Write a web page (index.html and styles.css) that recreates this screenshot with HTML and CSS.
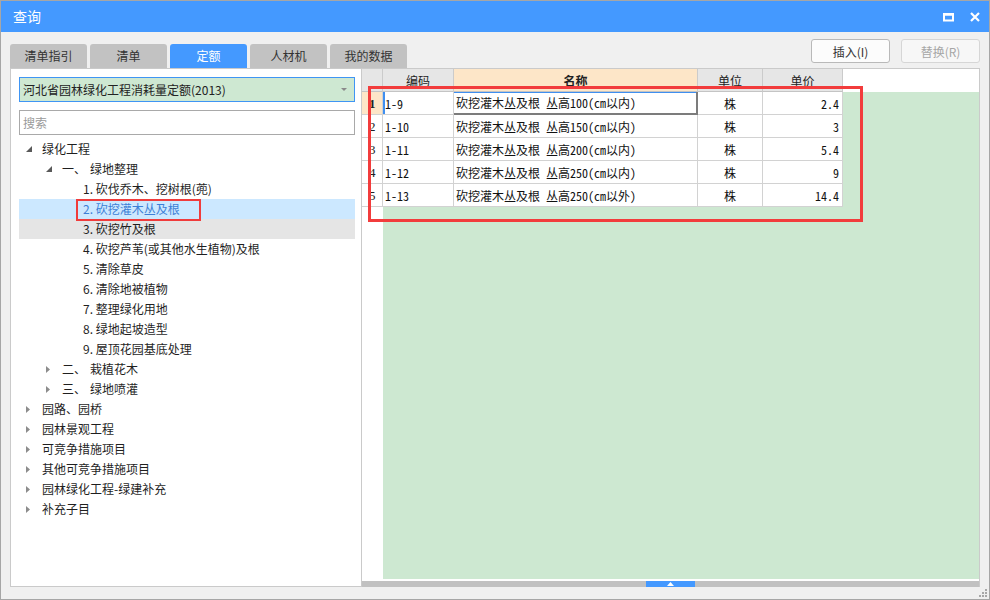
FILE: index.html
```html
<!DOCTYPE html>
<html lang="zh-CN">
<head>
<meta charset="utf-8">
<title>查询</title>
<link rel="stylesheet" href="styles.css">
</head>
<body>
<div class="window">
  <div class="titlebar">
    <span class="title">查询</span>
    <div class="win-btns">
      <svg class="ico-max" width="11" height="9" viewBox="0 0 11 9"><rect x="1" y="1.5" width="9" height="6" fill="none" stroke="#fff" stroke-width="2"/><rect x="0" y="0" width="11" height="2.5" fill="#fff"/></svg>
      <svg class="ico-close" width="10" height="10" viewBox="0 0 10 10"><path d="M1 1L9 9M9 1L1 9" stroke="#fff" stroke-width="2.2" fill="none"/></svg>
    </div>
  </div>

  <div class="toolbar">
    <div class="tabs">
      <div class="tab">清单指引</div>
      <div class="tab">清单</div>
      <div class="tab active">定额</div>
      <div class="tab">人材机</div>
      <div class="tab">我的数据</div>
    </div>
    <div class="actions">
      <button class="btn">插入(I)</button>
      <button class="btn disabled">替换(R)</button>
    </div>
  </div>

  <div class="main">
    <div class="left">
      <div class="combo"><span>河北省园林绿化工程消耗量定额(2013)</span><span class="combo-arrow"></span></div>
      <div class="search">搜索</div>
      <div class="tree">
        <div class="node l0"><span class="arr"><svg width="6" height="6" viewBox="0 0 6 6"><polygon points="6,0 6,6 0,6" fill="#595959"/></svg></span><span>绿化工程</span></div>
        <div class="node l1"><span class="arr"><svg width="6" height="6" viewBox="0 0 6 6"><polygon points="6,0 6,6 0,6" fill="#595959"/></svg></span><span>一、</span><span class="sp">绿地整理</span></div>
        <div class="node l2"><span>1. 砍伐乔木、挖树根(蔸)</span></div>
        <div class="node l2 selected"><span>2. 砍挖灌木丛及根</span></div>
        <div class="node l2 hover"><span>3. 砍挖竹及根</span></div>
        <div class="node l2"><span>4. 砍挖芦苇(或其他水生植物)及根</span></div>
        <div class="node l2"><span>5. 清除草皮</span></div>
        <div class="node l2"><span>6. 清除地被植物</span></div>
        <div class="node l2"><span>7. 整理绿化用地</span></div>
        <div class="node l2"><span>8. 绿地起坡造型</span></div>
        <div class="node l2"><span>9. 屋顶花园基底处理</span></div>
        <div class="node l1"><span class="arr"><svg width="4" height="7" viewBox="0 0 4 7"><polygon points="0,0 4,3.5 0,7" fill="#8c8c8c"/></svg></span><span>二、</span><span class="sp">栽植花木</span></div>
        <div class="node l1"><span class="arr"><svg width="4" height="7" viewBox="0 0 4 7"><polygon points="0,0 4,3.5 0,7" fill="#8c8c8c"/></svg></span><span>三、</span><span class="sp">绿地喷灌</span></div>
        <div class="node l0"><span class="arr"><svg width="4" height="7" viewBox="0 0 4 7"><polygon points="0,0 4,3.5 0,7" fill="#8c8c8c"/></svg></span><span>园路、园桥</span></div>
        <div class="node l0"><span class="arr"><svg width="4" height="7" viewBox="0 0 4 7"><polygon points="0,0 4,3.5 0,7" fill="#8c8c8c"/></svg></span><span>园林景观工程</span></div>
        <div class="node l0"><span class="arr"><svg width="4" height="7" viewBox="0 0 4 7"><polygon points="0,0 4,3.5 0,7" fill="#8c8c8c"/></svg></span><span>可竞争措施项目</span></div>
        <div class="node l0"><span class="arr"><svg width="4" height="7" viewBox="0 0 4 7"><polygon points="0,0 4,3.5 0,7" fill="#8c8c8c"/></svg></span><span>其他可竞争措施项目</span></div>
        <div class="node l0"><span class="arr"><svg width="4" height="7" viewBox="0 0 4 7"><polygon points="0,0 4,3.5 0,7" fill="#8c8c8c"/></svg></span><span>园林绿化工程-绿建补充</span></div>
        <div class="node l0"><span class="arr"><svg width="4" height="7" viewBox="0 0 4 7"><polygon points="0,0 4,3.5 0,7" fill="#8c8c8c"/></svg></span><span>补充子目</span></div>
      </div>
    </div>

    <div class="grid">
      <div class="ghead">
        <div class="hc c-num"></div>
        <div class="hc c-code">编码</div>
        <div class="hc c-name active">名称</div>
        <div class="hc c-unit">单位</div>
        <div class="hc c-price">单价</div>
        <div class="hc-rest"></div>
      </div>
      <div class="gbody">
        <div class="rownums">
          <div class="rn current">1</div>
          <div class="rn">2</div>
          <div class="rn">3</div>
          <div class="rn">4</div>
          <div class="rn">5</div>
        </div>
        <div class="gdata">
          <div class="row">
            <div class="cell c-code focus-row">1-9</div>
            <div class="cell c-name focus">砍挖灌木丛及根 丛高100(cm以内)</div>
            <div class="cell c-unit">株</div>
            <div class="cell c-price">2.4</div>
          </div>
          <div class="row">
            <div class="cell c-code">1-10</div>
            <div class="cell c-name">砍挖灌木丛及根 丛高150(cm以内)</div>
            <div class="cell c-unit">株</div>
            <div class="cell c-price">3</div>
          </div>
          <div class="row">
            <div class="cell c-code">1-11</div>
            <div class="cell c-name">砍挖灌木丛及根 丛高200(cm以内)</div>
            <div class="cell c-unit">株</div>
            <div class="cell c-price">5.4</div>
          </div>
          <div class="row">
            <div class="cell c-code">1-12</div>
            <div class="cell c-name">砍挖灌木丛及根 丛高250(cm以内)</div>
            <div class="cell c-unit">株</div>
            <div class="cell c-price">9</div>
          </div>
          <div class="row">
            <div class="cell c-code">1-13</div>
            <div class="cell c-name">砍挖灌木丛及根 丛高250(cm以外)</div>
            <div class="cell c-unit">株</div>
            <div class="cell c-price">14.4</div>
          </div>
        </div>
      </div>
      <div class="hscroll"><div class="thumb"><svg width="7" height="4" viewBox="0 0 7 4"><polygon points="3.5,0 7,4 0,4" fill="#fff"/></svg></div></div>
      <div class="mark-grid"></div>
    </div>
  </div>

  <svg class="grip" width="8" height="8" viewBox="0 0 8 8">
    <rect x="6" y="0" width="2" height="2" fill="#a8a8a8"/>
    <rect x="3" y="3" width="2" height="2" fill="#a8a8a8"/>
    <rect x="6" y="3" width="2" height="2" fill="#a8a8a8"/>
    <rect x="0" y="6" width="2" height="2" fill="#a8a8a8"/>
    <rect x="3" y="6" width="2" height="2" fill="#a8a8a8"/>
    <rect x="6" y="6" width="2" height="2" fill="#a8a8a8"/>
  </svg>
</div>
</body>
</html>
```

FILE: styles.css
```css
html, body {
  margin: 0;
  padding: 0;
  background: #ffffff;
}

body {
  font-family: "Noto Sans CJK SC", "Noto Sans", sans-serif;
  font-size: 12px;
  color: #222;
}

.window {
  position: relative;
  width: 990px;
  height: 600px;
  box-sizing: border-box;
  border: 1px solid #a6a6a6;
  background: #f0f0f0;
  display: flex;
  flex-direction: column;
}

/* title bar */
.titlebar {
  flex: none;
  height: 31px;
  background: #4499ff;
  display: flex;
  align-items: center;
  justify-content: space-between;
  padding: 0 9px 0 12px;
  color: #fff;
}

.title {
  font-size: 14px;
  line-height: 31px;
}

.win-btns {
  display: flex;
  align-items: center;
  gap: 16px;
  padding-top: 1px;
}

.win-btns svg {
  display: block;
}

/* toolbar */
.toolbar {
  flex: none;
  height: 36px;
  display: flex;
  justify-content: space-between;
  padding: 0 9px;
}

.tabs {
  display: flex;
  gap: 3px;
  align-self: flex-end;
}

.tab {
  width: 77px;
  height: 24px;
  line-height: 24px;
  text-align: center;
  background: #c2c2c2;
  border-radius: 3px 3px 0 0;
  color: #333;
  font-size: 12px;
}

.tab.active {
  background: #4499ff;
  color: #fff;
}

.actions {
  display: flex;
  gap: 11px;
  margin-top: 7px;
}

.btn {
  width: 79px;
  height: 24px;
  box-sizing: border-box;
  border: 1px solid #b9b9b9;
  border-radius: 3px;
  background: #fcfcfc;
  font-family: "Noto Sans CJK SC", "Noto Sans", sans-serif;
  font-size: 12px;
  color: #333;
  padding: 0;
}

.btn.disabled {
  border-color: #d6d6d6;
  color: #a6a6a6;
  background: #f7f7f7;
}

/* main area */
.main {
  flex: 1;
  display: flex;
  margin: 0 9px 12px 9px;
  min-height: 0;
}

.left {
  flex: none;
  width: 352px;
  box-sizing: border-box;
  border: 1px solid #cacaca;
  background: #fff;
  padding: 8px 6px 0 8px;
}

.combo {
  height: 25px;
  box-sizing: border-box;
  border: 1px solid #3f95f4;
  background: #cee8d2;
  padding-left: 3px;
  line-height: 23px;
  display: flex;
  justify-content: space-between;
  align-items: center;
  color: #222;
}

.combo-arrow {
  width: 0;
  height: 0;
  border-left: 3px solid transparent;
  border-right: 3px solid transparent;
  border-top: 3px solid #8a8a8a;
  margin-right: 7px;
}

.search {
  margin-top: 8px;
  height: 25px;
  box-sizing: border-box;
  border: 1px solid #a9a9a9;
  line-height: 23px;
  padding-left: 3px;
  color: #9a9a9a;
}

.tree {
  margin-top: 4px;
}

.node {
  height: 20px;
  line-height: 20px;
  display: flex;
  align-items: center;
  white-space: nowrap;
  color: #1f1f1f;
  position: relative;
}

.node.l0 { padding-left: 7px; }
.node.l1 { padding-left: 27px; }
.node.l2 { padding-left: 64px; }

.arr {
  width: 16px;
  height: 20px;
  display: flex;
  align-items: center;
}

.arr svg {
  display: block;
}

.sp {
  margin-left: 4px;
}

.node.selected {
  background: #cce8ff;
  color: #3d7fd6;
  z-index: 2;
}

.node.selected::after {
  content: "";
  position: absolute;
  left: 57px;
  top: 0;
  width: 125px;
  height: 22px;
  box-sizing: border-box;
  border: 2px solid #f03c3c;
}

.node.hover {
  background: #e5e5e5;
}

/* grid */
.grid {
  flex: 1;
  position: relative;
  display: flex;
  flex-direction: column;
  border-top: 1px solid #cacaca;
  border-right: 1px solid #cacaca;
  background: #fff;
  font-family: "Noto Sans Mono CJK SC", "Noto Sans CJK SC", monospace;
  font-size: 12px;
  color: #111;
}

.ghead {
  flex: none;
  display: flex;
  height: 23px;
}

.hc {
  flex: none;
  box-sizing: border-box;
  height: 23px;
  line-height: 23px;
  background: #e6e6e6;
  border-right: 1px solid #cbcbcb;
  border-bottom: 1px solid #c4c4c4;
  text-align: center;
  color: #222;
}

.hc.active {
  background: #fde6c8;
  font-weight: bold;
}

.hc-rest {
  flex: 1;
  background: #fff;
}

.c-num { width: 21px; }
.c-code { width: 71px; }
.c-name { width: 244px; }
.c-unit { width: 65px; }
.c-price { width: 80px; }

.gbody {
  flex: 1;
  display: flex;
  min-height: 0;
}

.rownums {
  flex: none;
  width: 21px;
  background: #fff;
}

.rn {
  box-sizing: border-box;
  height: 23px;
  line-height: 23px;
  border-right: 1px solid #d2d2d2;
  border-bottom: 1px solid #d2d2d2;
  padding-left: 7px;
  font-family: "Liberation Serif", serif;
  font-size: 13px;
  color: #222;
}

.rn.current {
  background: #fde6c8;
  font-weight: bold;
}

.gdata {
  flex: 1;
  background: #cde8d1;
}

.row {
  display: flex;
}

.cell {
  flex: none;
  box-sizing: border-box;
  height: 23px;
  line-height: 23px;
  background: #fff;
  border-right: 1px solid #d2d2d2;
  border-bottom: 1px solid #d2d2d2;
  white-space: nowrap;
  overflow: hidden;
}

.cell.c-code { padding-left: 2px; }
.cell.c-name { padding-left: 2px; }
.cell.c-unit { text-align: center; }
.cell.c-price { text-align: right; padding-right: 3px; }

.cell.focus-row {
  box-shadow: inset 2px 0 0 #3f8ff0;
}

.cell.focus {
  border-right: 2px solid #7c7c7c;
  border-bottom: 2px solid #7c7c7c;
  box-shadow: inset 0 1px 0 #3f8ff0;
  line-height: 22px;
}

.hscroll {
  flex: none;
  height: 6px;
  margin-top: 2px;
  background: #c1c1c1;
  display: flex;
  justify-content: center;
}

.thumb {
  width: 49px;
  height: 6px;
  background: #4499ff;
  display: flex;
  align-items: flex-end;
  justify-content: center;
}

.thumb svg {
  display: block;
  margin-bottom: 1px;
}

.mark-grid {
  position: absolute;
  left: 6px;
  top: 17px;
  width: 495px;
  height: 136px;
  box-sizing: border-box;
  border: 3px solid #f23c3c;
  pointer-events: none;
}

.grip {
  position: absolute;
  right: 2px;
  bottom: 2px;
}
```
